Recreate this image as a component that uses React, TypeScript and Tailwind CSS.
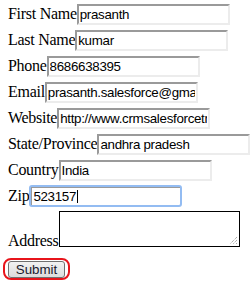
import React from 'react';

const inputCls =
  'h-[21px] border-2 border-t-[#9a9a9a] border-l-[#9a9a9a] border-b-[#ececec] border-r-[#ececec] bg-white px-[1px] text-[13.33px] tracking-[-0.3px] text-black outline-none';

interface Field {
  label: string;
  value: string;
}

const fields: Field[] = [
  { label: 'First Name', value: 'prasanth' },
  { label: 'Last Name', value: 'kumar' },
  { label: 'Phone', value: '8686638395' },
  { label: 'Email', value: 'prasanth.salesforce@gmail.com' },
  { label: 'Website', value: 'http://www.crmsalesforcetraining.com' },
  { label: 'State/Province', value: 'andhra pradesh' },
  { label: 'Country', value: 'India' },
];

export default function App() {
  return (
    <div
      className="bg-white w-[252px] h-[296px] pl-[8px] pt-[1px] text-black"
      style={{ fontFamily: '"Liberation Serif", "Times New Roman", serif' }}
    >
      {fields.map((f) => (
        <div key={f.label} className="flex items-center h-[26px]">
          <span className="text-[16px] tracking-[-0.28px] leading-[18px] whitespace-nowrap">{f.label}</span>
          <input
            readOnly
            value={f.value}
            className={`${inputCls} w-[153px] shrink-0`}
            style={{ fontFamily: '"Liberation Sans", Arial, sans-serif' }}
          />
        </div>
      ))}
      <div className="flex items-center h-[26px]">
        <span className="text-[16px] tracking-[-0.28px] leading-[18px]">Zip</span>
        <div className="w-[153px] h-[22px] rounded-[3px] border-2 border-[#93bcf2] shrink-0">
          <div
            className="h-full border-t border-l border-t-[#9a9a9a] border-l-[#9a9a9a] pl-[1px] text-[13.33px] tracking-[-0.3px] leading-[16px] flex items-center"
            style={{ fontFamily: '"Liberation Sans", Arial, sans-serif' }}
          >
            523157
            <span className="inline-block w-[1px] h-[13px] bg-black ml-[1px]" />
          </div>
        </div>
      </div>
      <div className="flex items-end mt-[2px]">
        <span className="text-[16px] tracking-[-0.28px] leading-[18px] mb-[-3px]">Address</span>
        <div className="relative ml-[1px] w-[181px] h-[36px] border border-black bg-white shrink-0">
          <svg className="absolute right-[1px] bottom-[1px]" width="10" height="10" viewBox="0 0 10 10">
            <path d="M9 2 L2 9 M9 5 L5 9 M9 8 L8 9" stroke="#8a8a8a" strokeWidth="1" strokeDasharray="1 1" />
          </svg>
        </div>
      </div>
      <div className="mt-[11px] ml-[-5px] w-[67px] h-[22px] rounded-[8px] border-2 border-[#e8141b] flex items-center justify-center">
        <button
          className="w-[57px] h-[17px] rounded-[3px] border border-[#707070] bg-gradient-to-b from-[#f2f2f2] to-[#dcdcdc] text-[13.33px] leading-[15px] text-[#1a1a2e]"
          style={{ fontFamily: '"Liberation Sans", Arial, sans-serif' }}
        >
          Submit
        </button>
      </div>
    </div>
  );
}
